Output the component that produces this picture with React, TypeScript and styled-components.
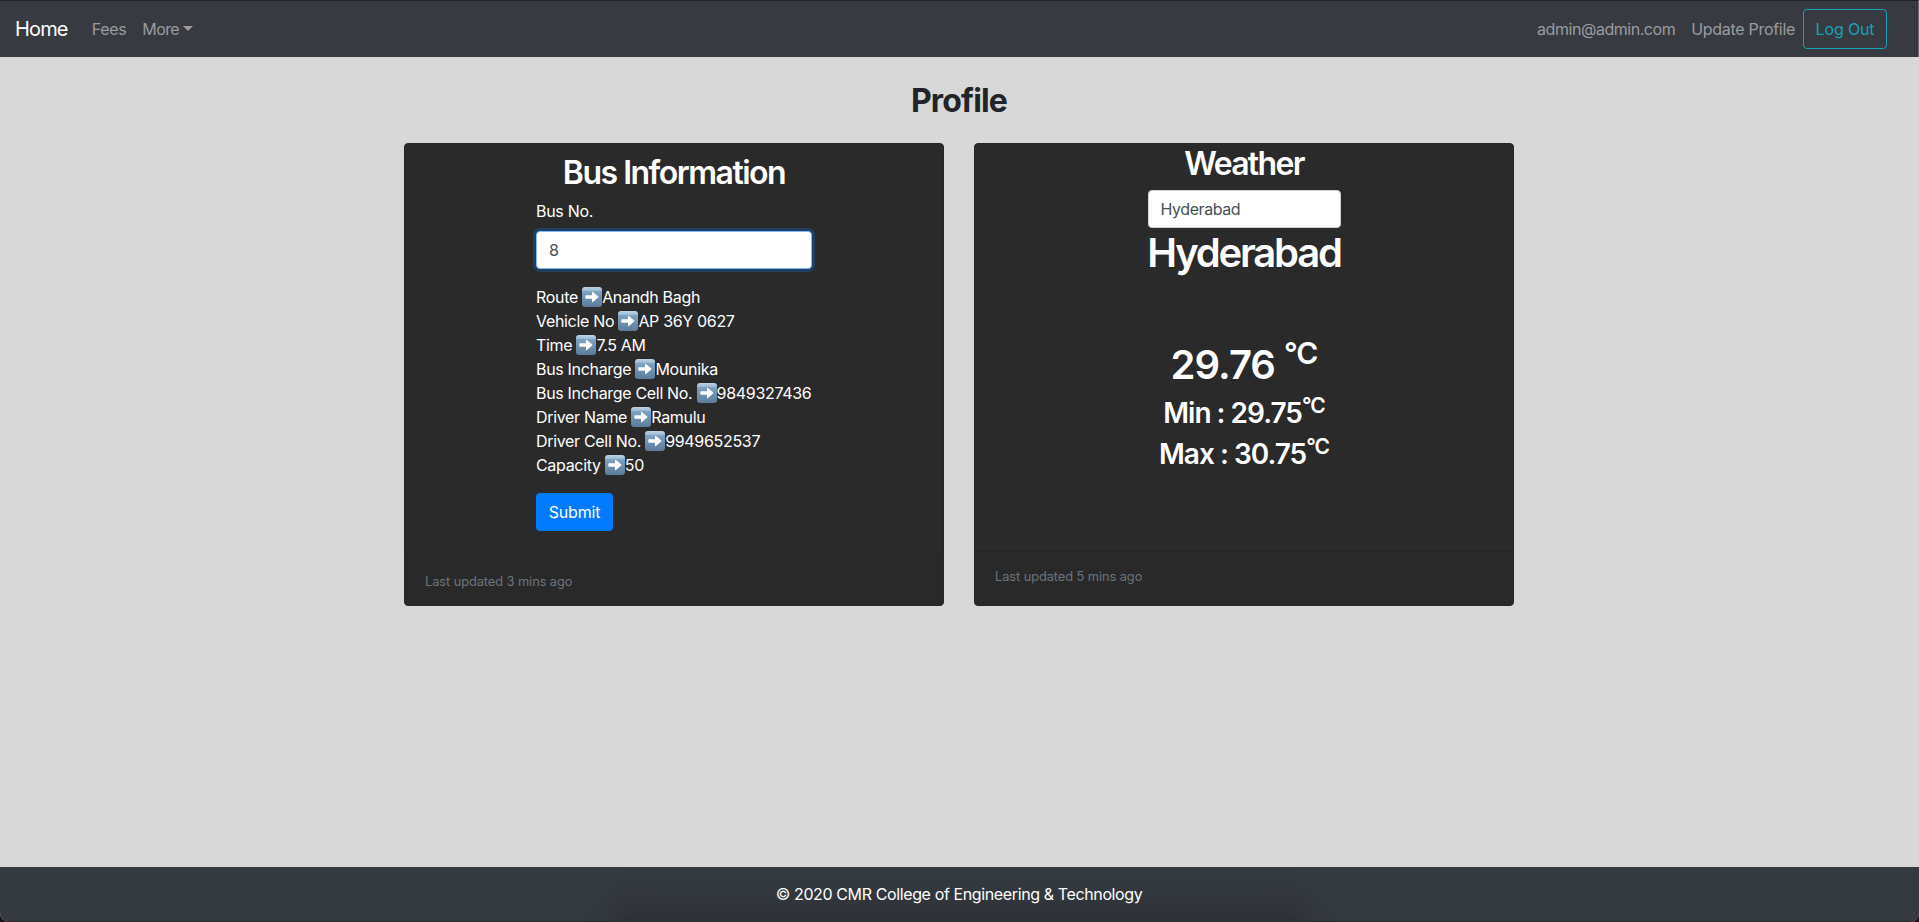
import React from "react";
import styled, { createGlobalStyle } from "styled-components";

const GlobalStyle = createGlobalStyle`
  *, *::before, *::after { box-sizing: border-box; }
  body {
    margin: 0;
    background: #1c1216;
    color: #212529;
    font-family: Inter, "Liberation Sans", sans-serif;
    font-size: 16px;
    line-height: 24px;
    -webkit-font-smoothing: antialiased;
  }
  h1, h2, h3, p { margin: 0; }
`;

const Page = styled.div`
  display: flex;
  flex-direction: column;
  height: 922px;
  overflow: hidden;
  border-radius: 0 0 9px 9px;
  background: #d8d8d8;
`;

const Navbar = styled.nav`
  display: flex;
  align-items: center;
  height: 57px;
  padding: 0 31px 0 15px;
  border-top: 1px solid #232324;
  border-right: 1px solid #66696d;
  background: #373a41;
`;

const Brand = styled.a`
  margin-right: 16px;
  color: #fff;
  font-size: 20px;
  line-height: 30px;
  letter-spacing: -0.85px;
`;

const NavLink = styled.a<{ $spacing?: number }>`
  display: flex;
  align-items: center;
  padding: 8px;
  color: #9b9c9f;
  letter-spacing: ${(p) => p.$spacing ?? -0.3}px;
  white-space: nowrap;
`;

const Caret = styled.span`
  margin: -2px 0 0 4px;
  border: 5px solid transparent;
  border-top-color: currentColor;
  border-bottom: 0;
`;

const NavEnd = styled.div`
  display: flex;
  align-items: center;
  margin-left: auto;
`;

const LogOut = styled.button`
  width: 84px;
  height: 40px;
  padding: 0;
  border: 1px solid #17a2b8;
  border-radius: 4px;
  background: transparent;
  color: #17a2b8;
  font: inherit;
  letter-spacing: -0.15px;
`;

const Main = styled.main`
  flex: 1;
  display: flex;
  flex-direction: column;
  align-items: center;
  padding: 25px 1px 0 0;
`;

const Title = styled.h1`
  font-size: 32px;
  font-weight: 700;
  line-height: 38px;
  letter-spacing: -0.85px;
`;

const Deck = styled.div`
  display: flex;
  gap: 30px;
  width: 1110px;
  height: 463px;
  margin-top: 23px;
`;

const Card = styled.section`
  flex: 1;
  display: flex;
  flex-direction: column;
  align-items: center;
  border: 1px solid #262626;
  border-radius: 4px;
  background: #2a2a2a;
  color: #fff;
`;

const Heading = styled.h2<{ $top: number; $spacing: number }>`
  margin-top: ${(p) => p.$top}px;
  font-size: 32px;
  font-weight: 600;
  line-height: 38px;
  letter-spacing: ${(p) => p.$spacing}px;
`;

const BusForm = styled.form`
  display: flex;
  flex-direction: column;
  align-items: flex-start;
  width: 276px;
  margin-top: 7px;
`;

const Label = styled.label`
  margin-bottom: 8px;
  letter-spacing: -0.3px;
`;

const Input = styled.input<{ $active?: boolean }>`
  width: 100%;
  height: 38px;
  padding: 6px 12px;
  border: 1px solid ${(p) => (p.$active ? "#80bdff" : "#ced4da")};
  border-radius: 4px;
  outline: none;
  background: #fff;
  color: #495057;
  font: inherit;
  letter-spacing: -0.42px;
  box-shadow: ${(p) => (p.$active ? "0 0 0 3px #203f63" : "none")};
`;

const Details = styled.div`
  margin: 16px 0;
`;

const Detail = styled.p`
  display: flex;
  align-items: center;
  height: 24px;
  letter-spacing: -0.32px;
  white-space: pre;
`;

const Submit = styled.button`
  width: 77px;
  height: 38px;
  padding: 0;
  border: 0;
  border-radius: 4px;
  background: #007bff;
  color: #fff;
  font: inherit;
  letter-spacing: -0.2px;
`;

const CardFooter = styled.footer<{ $height: number }>`
  align-self: stretch;
  height: ${(p) => p.$height}px;
  margin-top: auto;
  padding: 13px 20px 0;
  border-top: 1px solid #252525;
  background: #292929;
  border-radius: 0 0 3px 3px;
  color: #6c757d;
  font-size: 12.8px;
  letter-spacing: -0.06px;
`;

const WeatherBody = styled.div`
  display: flex;
  flex-direction: column;
  align-items: center;
  width: 193px;
  margin-top: 7px;
  white-space: nowrap;
`;

const City = styled.h1`
  margin-top: 1px;
  font-size: 40px;
  font-weight: 600;
  line-height: 48px;
  letter-spacing: -2.2px;
`;

const Temperature = styled.h1`
  margin-top: 56px;
  font-size: 40px;
  font-weight: 600;
  line-height: 64px;
  letter-spacing: -1px;
`;

const Range = styled.h3<{ $top: number }>`
  margin-top: ${(p) => p.$top}px;
  font-size: 28px;
  font-weight: 600;
  line-height: 33px;
  letter-spacing: -1px;
`;

const Degree = styled.sup<{ $raise: number }>`
  position: relative;
  top: ${(p) => -p.$raise}px;
  font-size: 75%;
  line-height: 0;
  vertical-align: baseline;
`;

const SiteFooter = styled.footer`
  position: relative;
  display: flex;
  justify-content: center;
  align-items: center;
  height: 55px;
  padding-right: 1px;
  overflow: hidden;
  border-bottom: 1px solid #2b2c30;
  background: #343a40;
  color: #fff;
  letter-spacing: -0.38px;

  &::before {
    content: "";
    position: absolute;
    top: 48px;
    left: 50%;
    width: 680px;
    height: 40px;
    margin-left: -340px;
    border-radius: 12px;
    background: #2f3137;
    box-shadow: 0 0 28px 12px #2f3137;
  }
`;

const Copyright = styled.span`
  position: relative;
`;

const ArrowEmoji = () => (
  <svg width="20" height="20" viewBox="0 0 20 20" aria-hidden="true">
    <defs>
      <linearGradient id="tile" x1="0" y1="0" x2="0" y2="1">
        <stop offset="0" stopColor="#bfd5e6" />
        <stop offset=".18" stopColor="#9dbbd3" />
        <stop offset=".22" stopColor="#7fa2c0" />
        <stop offset="1" stopColor="#5b7c9b" />
      </linearGradient>
    </defs>
    <rect width="20" height="20" rx="3" fill="url(#tile)" />
    <path d="M4 8.3h6V5.4q0-1 .9-.4l5.3 4.4q.7.6 0 1.2l-5.3 4.4q-.9.6-.9-.4v-2.9H4q-.7 0-.7-.7V9q0-.7.7-.7z" fill="#fff" />
  </svg>
);

const details: [string, string][] = [
  ["Route", "Anandh Bagh"],
  ["Vehicle No", "AP 36Y 0627"],
  ["Time", "7.5 AM"],
  ["Bus Incharge", "Mounika"],
  ["Bus Incharge Cell No.", "9849327436"],
  ["Driver Name", "Ramulu"],
  ["Driver Cell No.", "9949652537"],
  ["Capacity", "50"],
];

export default function App() {
  return (
    <Page>
      <GlobalStyle />
      <Navbar>
        <Brand>Home</Brand>
        <NavLink>Fees</NavLink>
        <NavLink $spacing={-0.6}>More<Caret /></NavLink>
        <NavEnd>
          <NavLink $spacing={-0.46}>admin@admin.com</NavLink>
          <NavLink>Update Profile</NavLink>
          <LogOut>Log Out</LogOut>
        </NavEnd>
      </Navbar>
      <Main>
        <Title>Profile</Title>
        <Deck>
          <Card>
            <Heading $top={10} $spacing={-1.5}>Bus Information</Heading>
            <BusForm onSubmit={(e) => e.preventDefault()}>
              <Label htmlFor="bus">Bus No.</Label>
              <Input id="bus" $active defaultValue="8" />
              <Details>
                {details.map(([name, value]) => (
                  <Detail key={name}>
                    <span>{name} </span>
                    <ArrowEmoji />
                    <span>{value}</span>
                  </Detail>
                ))}
              </Details>
              <Submit>Submit</Submit>
            </BusForm>
            <CardFooter $height={49}>Last updated 3 mins ago</CardFooter>
          </Card>
          <Card>
            <Heading $top={1} $spacing={-1.7}>Weather</Heading>
            <WeatherBody>
              <Input defaultValue="Hyderabad" />
              <City>Hyderabad</City>
              <Temperature>29.76 <Degree $raise={15}>°C</Degree></Temperature>
              <Range $top={0}>Min : 29.75<Degree $raise={10}>°C</Degree></Range>
              <Range $top={8}>Max : 30.75<Degree $raise={10}>°C</Degree></Range>
            </WeatherBody>
            <CardFooter $height={54}>Last updated 5 mins ago</CardFooter>
          </Card>
        </Deck>
      </Main>
      <SiteFooter>
        <Copyright>© 2020 CMR College of Engineering &amp; Technology</Copyright>
      </SiteFooter>
    </Page>
  );
}
